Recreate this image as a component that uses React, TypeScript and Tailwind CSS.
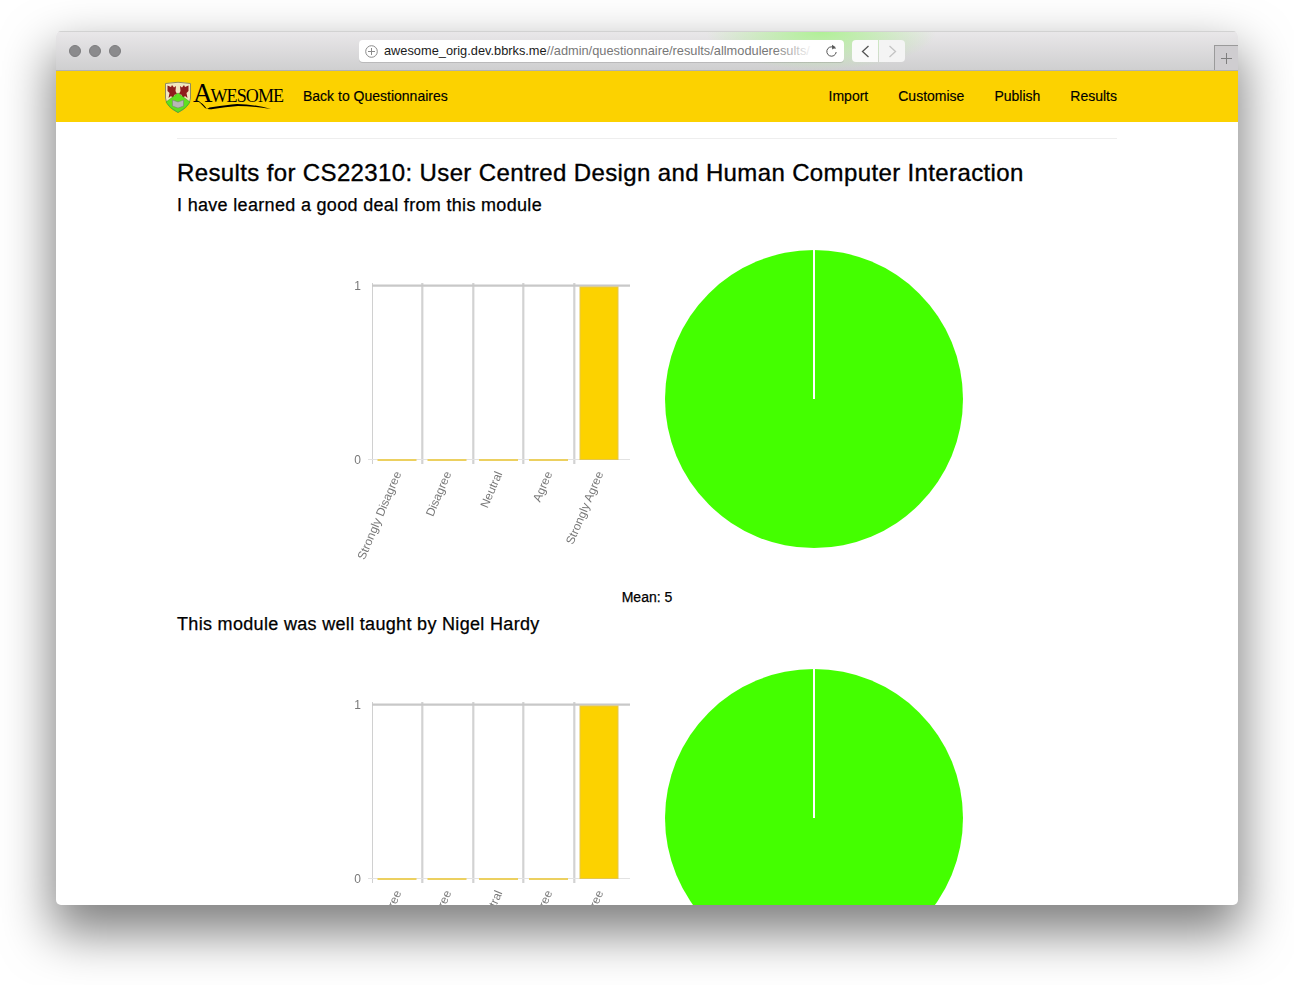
import React from "react";

const labels: [string, number][] = [
  ["Strongly Disagree", 401.5],
  ["Disagree", 451.5],
  ["Neutral", 502.5],
  ["Agree", 552.5],
  ["Strongly Agree", 603.5],
];

function Chart() {
  const bars = [377.5, 427.5, 479, 529];
  const grid = [422.3, 473.3, 523.3, 574.3];
  return (
    <svg width={640} height={340} viewBox="340 240 640 340" className="block ml-[163px]">
      <line x1={372.5} y1={283} x2={372.5} y2={464} stroke="#d0d0d0" strokeWidth={1} />
      {grid.map((x) => (
        <line key={x} x1={x} y1={283} x2={x} y2={464} stroke="#d2d2d2" strokeWidth={2.2} />
      ))}
      <line x1={368} y1={459.5} x2={630} y2={459.5} stroke="#e2e2e2" strokeWidth={1} />
      <line x1={372} y1={285.7} x2={630} y2={285.7} stroke="#c8c8c8" strokeWidth={2.2} />
      {bars.map((x) => (
        <rect key={x} x={x} y={459} width={39} height={2} fill="#ecd060" />
      ))}
      <rect x={580} y={287} width={38} height={172.5} fill="#fcd200" stroke="#e3c650" strokeWidth={1} />
      <g opacity={0.99} fontFamily="Liberation Sans, sans-serif" fill="#777">
        <text x={361} y={290} textAnchor="end" fontSize={12}>1</text>
        <text x={361} y={464} textAnchor="end" fontSize={12}>0</text>
        {labels.map(([t, x]) => (
          <text
            key={t}
            x={x}
            y={473.5}
            textAnchor="end"
            fontSize={11.9}
            transform={`rotate(-67 ${x} 473.5)`}
          >
            {t}
          </text>
        ))}
      </g>
      <circle cx={814} cy={399} r={149} fill="#44ff00" />
      <line x1={814} y1={250} x2={814} y2={399} stroke="#ffffff" strokeWidth={2} />
    </svg>
  );
}

function Logo() {
  return (
    <div className="relative w-[122px] h-[34px]">
      <svg width={122} height={34} viewBox="0 0 122 34" className="block">
        <path d="M0.5 2.5 Q13 0 25.5 2.5 L25.5 17 Q25 26 13 31.5 Q1 26 0.5 17 Z" fill="#f1e7c0" stroke="#8f8a60" strokeWidth={1} />
        <path d="M2.5 4.5 L6 6 L7 4 L9 6.5 L11 5 L10.5 10 L12 13 L9 14 L9 18 L6 15 L3.5 17 L4.5 12 L2.5 10 Z" fill="#8f1d1d" />
        <path d="M23.5 4.5 L20 6 L19 4 L17 6.5 L15 5 L15.5 10 L14 13 L17 14 L17 18 L20 15 L22.5 17 L21.5 12 L23.5 10 Z" fill="#8f1d1d" />
        <path d="M13 12 L25 21 Q22 27 13 31.5 Q4 27 1 21 Z" fill="#5fe01f" stroke="#3e9a18" strokeWidth={0.5} />
        <path d="M7.5 19 L13 21 L18.5 19 L18.5 25 L13 27 L7.5 25 Z" fill="#b7b7b7" stroke="#777" strokeWidth={0.5} />
        <path d="M30 18 Q38 22 42 28 Q44 26 48 26 Q62 24 72 23 Q88 23 106 28 Q88 25 73 25 Q60 26 48 28 Q43 29 40 27 Q36 22 30 18 Z" fill="#000" />
      </svg>
      <div className="absolute left-[28px] top-0 flex items-baseline text-black font-['Liberation_Serif',serif] leading-none">
        <span className="text-[27px] leading-[24px] tracking-[-2px]">A</span>
        <span className="text-[18px] tracking-[-0.9px]">WESOME</span>
      </div>
    </div>
  );
}

function Question({ title }: { title: string }) {
  return (
    <section>
      <h3 className="text-[18px] leading-[28px] h-[26px] text-black tracking-[0.32px] [-webkit-text-stroke:0.25px_black]">{title}</h3>
      <div className="h-[23px]" />
      <Chart />
      <p className="mt-[9px] h-[21px] text-[14px] leading-[17px] text-center text-black [-webkit-text-stroke:0.25px_black]">Mean: 5</p>
    </section>
  );
}

export default function App() {
  return (
    <div className="w-[1294px] h-[985px] bg-white pt-[31px] pl-[56px] overflow-hidden font-['Liberation_Sans',Arial,sans-serif]">
      <div className="w-[1182px] h-[874px] rounded-[5px] overflow-hidden bg-white flex flex-col shadow-[0_24px_50px_4px_rgba(0,0,0,0.5)]">
        <header className="relative h-[40px] shrink-0 flex bg-gradient-to-b from-[#e9e7e9] to-[#cfcfd0] border-b border-t border-b-[#b2b2b2] border-t-[#d2d2d2]">
          <div className="absolute left-[650px] top-0 w-[230px] h-full bg-[radial-gradient(ellipse_farthest-side_at_50%_0%,#b0f096_0%,transparent_100%)]" />
          <div className="relative flex items-center gap-[8px] ml-[13px] w-[290px] h-[37px]">
            <span className="w-[12px] h-[12px] rounded-full bg-[#8b8b8d] border border-[#7d7d7f]" />
            <span className="w-[12px] h-[12px] rounded-full bg-[#8b8b8d] border border-[#7d7d7f]" />
            <span className="w-[12px] h-[12px] rounded-full bg-[#8b8b8d] border border-[#7d7d7f]" />
          </div>
          <div className="relative mt-[8px] h-[22px] w-[485px] bg-white rounded-[4px] flex items-center px-[6px] shadow-[0_1px_0_rgba(0,0,0,0.12)]">
            <svg width={13} height={13} viewBox="0 0 13 13" className="shrink-0">
              <circle cx={6.5} cy={6.5} r={5.8} fill="none" stroke="#8a8a8a" strokeWidth={1} />
              <path d="M6.5 3v7M3 6.5h7" stroke="#8a8a8a" strokeWidth={1} />
            </svg>
            <div className="relative ml-[6px] w-[430px] overflow-hidden whitespace-nowrap text-[12.8px] text-[#1a1a1a]">
              awesome_orig.dev.bbrks.me<span className="text-[#777]">//admin/questionnaire/results/allmoduleresults/</span>
              <div className="absolute right-0 top-0 h-full w-[40px] bg-gradient-to-r from-transparent to-white" />
            </div>
            <svg width={13} height={14} viewBox="0 0 13 14" className="ml-auto shrink-0">
              <path d="M10.5 5 A4.7 4.7 0 1 0 11.2 8" fill="none" stroke="#555" strokeWidth={1} />
              <path d="M7 0.8 L10.8 3.2 L7.2 5.4 Z" fill="#555" />
            </svg>
          </div>
          <div className="relative mt-[8px] ml-[8px] flex gap-px">
            <div className="w-[26px] h-[22px] bg-[#fafafa] rounded-l-[4px] flex items-center justify-center">
              <svg width={9} height={13} viewBox="0 0 9 13"><path d="M7.5 1 L1.5 6.5 L7.5 12" fill="none" stroke="#555" strokeWidth={1.3} /></svg>
            </div>
            <div className="w-[26px] h-[22px] bg-[#f4f4f4] rounded-r-[4px] flex items-center justify-center">
              <svg width={9} height={13} viewBox="0 0 9 13"><path d="M1.5 1 L7.5 6.5 L1.5 12" fill="none" stroke="#c4c4c4" strokeWidth={1.3} /></svg>
            </div>
          </div>
          <div className="absolute right-0 bottom-0 w-[24px] h-[25px] border-l border-t border-[#9a9a9a] bg-[#cfcdd0] flex items-center justify-center">
            <svg width={11} height={11} viewBox="0 0 11 11"><path d="M5.5 0v11M0 5.5h11" stroke="#7e7e7e" strokeWidth={1} /></svg>
          </div>
        </header>

        <nav className="h-[51px] shrink-0 bg-[#fcd200] flex items-center pl-[109px] pr-[121px] text-[14px] text-black [-webkit-text-stroke:0.15px_black]">
          <div className="mt-[3px] [-webkit-text-stroke:0px]"><Logo /></div>
          <a className="ml-[16px]">Back to Questionnaires</a>
          <div className="ml-auto flex gap-[30px]">
            <a>Import</a>
            <a>Customise</a>
            <a>Publish</a>
            <a>Results</a>
          </div>
        </nav>

        <main className="flex-1 min-h-0 overflow-hidden pt-[16px]">
          <div className="w-[940px] mx-auto">
            <div className="border-t border-[#eeeeee] pt-[19px]">
              <h2 className="text-[24px] leading-[30px] h-[30px] text-black tracking-[0.37px] [-webkit-text-stroke:0.35px_black]">
                Results for CS22310: User Centred Design and Human Computer Interaction
              </h2>
              <div className="h-[3px]" />
              <Question title="I have learned a good deal from this module" />
              <Question title="This module was well taught by Nigel Hardy" />
            </div>
          </div>
        </main>
      </div>
    </div>
  );
}
